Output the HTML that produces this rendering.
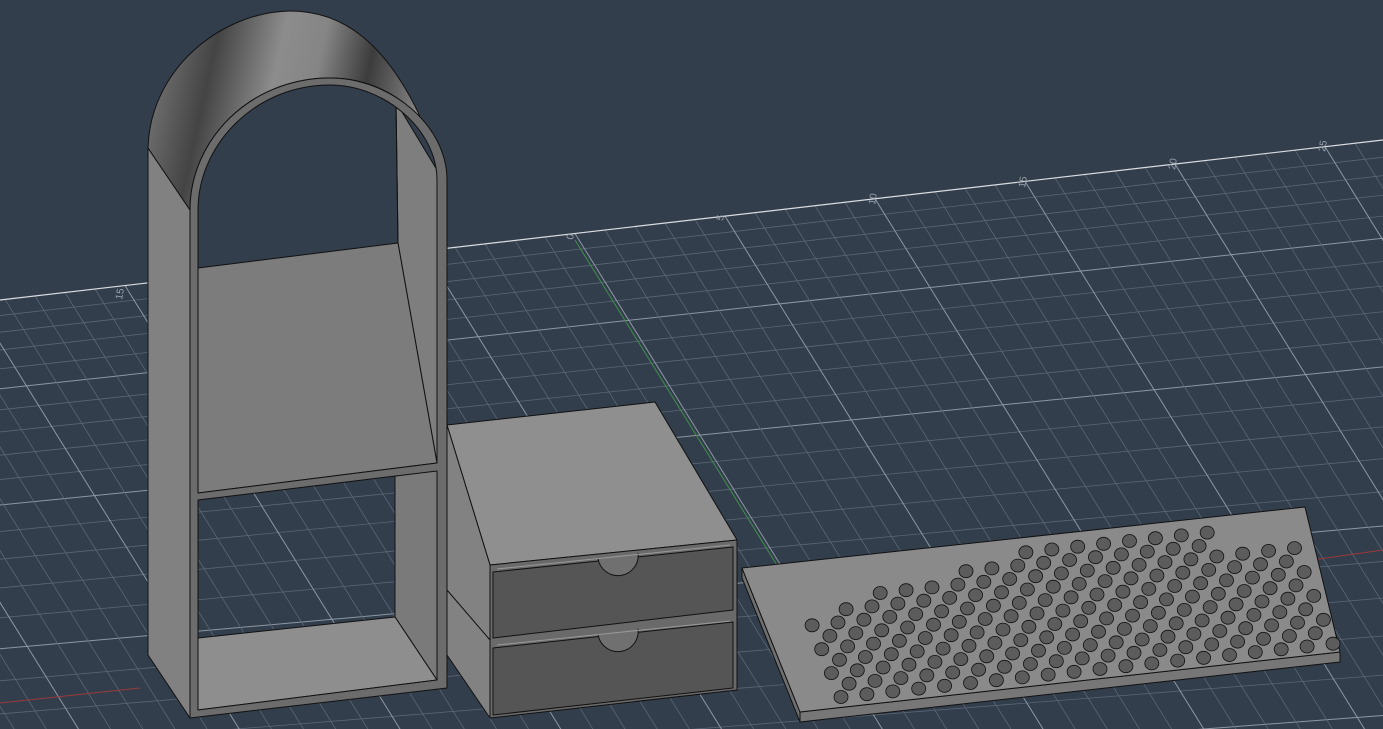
<!DOCTYPE html>
<html><head><meta charset="utf-8"><style>
html,body{margin:0;padding:0;background:#333e4c;overflow:hidden;width:1383px;height:729px}
svg{display:block;position:absolute;left:0;top:0}
text{font-family:"Liberation Sans",sans-serif;font-size:10px;fill:#9aa3ad}
</style></head><body>
<svg id="s" width="1383" height="729" viewBox="0 0 1383 729" xmlns="http://www.w3.org/2000/svg">
<defs>
<clipPath id="plane"><polygon points="0,300 1383,140 1383,729 0,729"/></clipPath>
<linearGradient id="barrel" x1="150" y1="60" x2="420" y2="120" gradientUnits="userSpaceOnUse">
<stop offset="0" stop-color="#777"/><stop offset="0.22" stop-color="#444"/><stop offset="0.45" stop-color="#8c8c8c"/><stop offset="0.6" stop-color="#858585"/><stop offset="0.78" stop-color="#3c3c3c"/><stop offset="1" stop-color="#8a8a8a"/>
</linearGradient>
</defs>
<rect width="1383" height="729" fill="#333e4c"/>
<g id="grid" clip-path="url(#plane)"></g>
<line x1="0" y1="300" x2="1383" y2="140" stroke="#d8dde2" stroke-width="1.2"/>
<line x1="575" y1="240" x2="780" y2="570" stroke="#3f8f4a" stroke-width="1"/>
<line x1="1290" y1="563" x2="1383" y2="550" stroke="#9a3a3a" stroke-width="1"/>
<line x1="0" y1="703" x2="140" y2="688" stroke="#9a3a3a" stroke-width="1"/>
<g>
<text transform="translate(122,300) rotate(-80)">15</text>
<text transform="translate(573,240) rotate(-80)">0</text>
<text transform="translate(723,221) rotate(-80)">5</text>
<text transform="translate(875,205) rotate(-80)">10</text>
<text transform="translate(1025,188) rotate(-80)">15</text>
<text transform="translate(1175,170) rotate(-80)">20</text>
<text transform="translate(1325,152) rotate(-80)">25</text>
</g>

<g stroke="#111" stroke-width="1" stroke-linejoin="round">
<polygon points="148,148 190,210 190,718 148,655" fill="#818181"/>
<path d="M148,148 C150,70 220,12 290,11 C345,11 385,45 418,112 L445,180 C440,120 390,78 330,78 C250,78 190,140 190,210 Z" fill="url(#barrel)"/>
<polygon points="396,102 437,170 437,463 398,243" fill="#7e7e7e"/>
<line x1="396" y1="102" x2="398" y2="243"/>
<polygon points="198,268 398,243 437,463 198,493" fill="#7c7c7c"/>
<polygon points="395,476 437,470 437,680 395,617" fill="#7a7a7a"/>
<polygon points="198,638 395,617 437,680 198,710" fill="#8e8e8e"/>
<path fill-rule="evenodd" fill="#6c6c6c" d="M190,210 C190,140 250,78 330,78 C390,78 447,125 447,180 L447,688 L190,718 Z
M198,210 C198,145 255,85 330,85 C385,85 437,130 437,180 L437,463 L198,493 Z
M198,500 L437,471 L437,680 L198,710 Z"/>
</g>

<g stroke="#111" stroke-width="1" stroke-linejoin="round">
<polygon points="447,425 655,402 737,540 490,565" fill="#8f8f8f"/>
<polygon points="447,425 490,565 490,718 447,655" fill="#828282"/>
<line x1="447" y1="590" x2="490" y2="640"/>
<polygon points="490,565 737,540 737,690 490,718" fill="#6a6a6a"/>
<polygon points="493,572 733,547 733,610 493,638" fill="#555"/>
<polygon points="493,648 733,622 733,688 493,715" fill="#555"/>
<path d="M598,558 A20,20 0 0 0 638,553" fill="#707070"/>
<path d="M598,634 A20,20 0 0 0 638,629" fill="#707070"/>
<line x1="497" y1="569" x2="730" y2="545" stroke="#999"/>
<line x1="497" y1="645" x2="730" y2="621" stroke="#999"/>
</g>

<g stroke="#111" stroke-width="1" stroke-linejoin="round">
<polygon points="742,568 800,712 800,722 742,578" fill="#6e6e6e"/>
<polygon points="800,712 1340,652 1340,662 800,722" fill="#777"/>
<polygon points="742,568 1305,507 1340,652 800,712" fill="#8a8a8a"/>
<g id="holes" fill="#5c5c5c" stroke="#111" stroke-width="0.8"></g>
</g>
</svg>
<script>
(function(){
var NS="http://www.w3.org/2000/svg";
var g=document.getElementById("grid");
function L(x1,y1,x2,y2,c,w){var l=document.createElementNS(NS,"line");l.setAttribute("x1",x1);l.setAttribute("y1",y1);l.setAttribute("x2",x2);l.setAttribute("y2",y2);l.setAttribute("stroke",c);l.setAttribute("stroke-width",w);g.appendChild(l);}
var sl=-160/1383;
for(var k=1;k<30;k++){var d=15*k+0.55*k*k;var maj=(k%5==0);
 L(0,300+d,1383,300+d+sl*1383*(1-d/1500),maj?"#8d97a3":"#5a6676",maj?1:0.8);}
for(var j=-60;j<60;j++){var x0=575+j*30;var y0=300+sl*x0;var maj=(j%5==0);
 L(x0,y0,x0+0.62*700,y0+700,maj?"#8d97a3":"#5a6676",maj?1:0.8);}
var h=document.getElementById("holes");
var P=[742,568],U=[563,-61],V=[58,144];
for(var r=0;r<11;r++){for(var c=0;c<22;c++){
 var u=0.08+c*0.046+(r%2?0.023:0),v=0.1+r*0.083;
 if(u>0.96||v>0.95)continue;
 if(v<0.4 && u<0.32-0.55*v)continue;
 if(v<0.2 && u<0.55-v)continue;
 if(u>0.82&&v<0.2)continue;
 var x=P[0]+U[0]*u+V[0]*v,y=P[1]+U[1]*u+V[1]*v;
 var e=document.createElementNS(NS,"ellipse");e.setAttribute("cx",x.toFixed(1));e.setAttribute("cy",y.toFixed(1));e.setAttribute("rx",7);e.setAttribute("ry",6.5);h.appendChild(e);}}
})();
</script>
</body></html>
